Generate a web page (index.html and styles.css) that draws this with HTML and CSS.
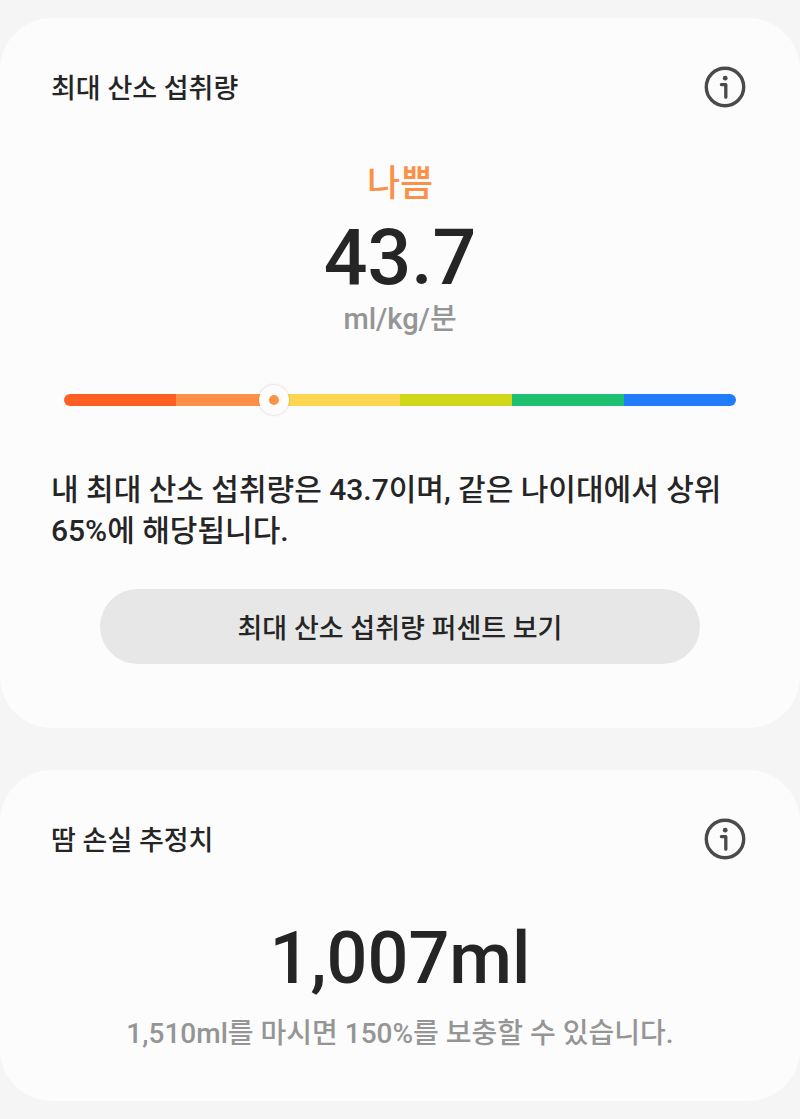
FILE: index.html
```html
<!DOCTYPE html>
<html lang="ko">
<head>
  <meta charset="utf-8">
  <meta name="viewport" content="width=device-width, initial-scale=1">
  <title>최대 산소 섭취량</title>
  <link rel="stylesheet" href="styles.css">
</head>
<body>
  <main class="page">
    <section class="card vo2-card">
      <div class="card-header">
        <h2 class="card-title">최대 산소 섭취량</h2>
        <button class="info-button" type="button" aria-label="정보">
          <svg class="info-icon" viewBox="0 0 42 42" aria-hidden="true">
            <circle cx="21" cy="21" r="18.7" fill="none" stroke="currentColor" stroke-width="3.4"/>
            <circle cx="21.2" cy="12.2" r="2.4" fill="currentColor"/>
            <path d="M17.4 18.6h4.4v12.6" fill="none" stroke="currentColor" stroke-width="3.3" stroke-linejoin="round" stroke-linecap="round"/>
          </svg>
        </button>
      </div>

      <div class="reading">
        <p class="level">나쁨</p>
        <p class="value">43.7</p>
        <p class="unit">ml/kg/분</p>
      </div>

      <div class="scale">
        <span class="segment segment-1"></span>
        <span class="segment segment-2"></span>
        <span class="segment segment-3"></span>
        <span class="segment segment-4"></span>
        <span class="segment segment-5"></span>
        <span class="segment segment-6"></span>
        <span class="marker" style="left: 31.25%"></span>
      </div>

      <p class="description">내 최대 산소 섭취량은 43.7이며, 같은 나이대에서 상위 65%에 해당됩니다.</p>
      <button class="button" type="button">최대 산소 섭취량 퍼센트 보기</button>
    </section>

    <section class="card sweat-card">
      <div class="card-header">
        <h2 class="card-title">땀 손실 추정치</h2>
        <button class="info-button" type="button" aria-label="정보">
          <svg class="info-icon" viewBox="0 0 42 42" aria-hidden="true">
            <circle cx="21" cy="21" r="18.7" fill="none" stroke="currentColor" stroke-width="3.4"/>
            <circle cx="21.2" cy="12.2" r="2.4" fill="currentColor"/>
            <path d="M17.4 18.6h4.4v12.6" fill="none" stroke="currentColor" stroke-width="3.3" stroke-linejoin="round" stroke-linecap="round"/>
          </svg>
        </button>
      </div>

      <p class="value sweat-value">1,007ml</p>
      <p class="hint">1,510ml를 마시면 150%를 보충할 수 있습니다.</p>
    </section>
  </main>
</body>
</html>
```

FILE: styles.css
```css
* {
  margin: 0;
  padding: 0;
  box-sizing: border-box;
}

body {
  background: #f5f5f5;
  color: #252525;
  font-family: Roboto, "Noto Sans CJK KR", sans-serif;
  font-weight: 500;
  word-break: keep-all;
}

.page {
  display: flex;
  flex-direction: column;
  gap: 42px;
  padding: 18px 0;
}

.card {
  display: flex;
  flex-direction: column;
  background: #fcfcfc;
  border-radius: 52px;
  padding: 48px 51px 64px;
}

.card-header {
  display: flex;
  align-items: center;
  justify-content: space-between;
}

.card-title {
  padding-top: 4px;
  font-size: 27px;
  font-weight: 500;
  line-height: 38px;
}

.info-button {
  width: 42px;
  height: 42px;
  margin-right: 3px;
  border: none;
  background: none;
  color: #4a4a4a;
  cursor: pointer;
}

.info-icon {
  display: block;
  width: 42px;
  height: 42px;
}

.reading {
  margin-top: 52px;
  text-align: center;
}

.level {
  margin-bottom: 6px;
  color: #fa9148;
  font-size: 36px;
  line-height: 48px;
}

.value {
  font-size: 77px;
  line-height: 88px;
  text-align: center;
}

.unit {
  color: #959595;
  font-size: 29px;
  line-height: 34px;
}

.scale {
  position: relative;
  display: flex;
  height: 12px;
  margin: 58px 13px 0;
}

.segment {
  flex: 1;
}

.segment-1 {
  background: #fe6023;
  border-radius: 6px 0 0 6px;
}

.segment-2 {
  background: #fe9145;
}

.segment-3 {
  background: #fed553;
}

.segment-4 {
  background: #ced71c;
}

.segment-5 {
  background: #1fbf72;
}

.segment-6 {
  background: #217cfc;
  border-radius: 0 6px 6px 0;
}

.marker {
  position: absolute;
  top: 50%;
  width: 30px;
  height: 30px;
  border: 10px solid #fcfcfc;
  border-radius: 50%;
  background: #fd9144;
  box-shadow: 0 0 3px rgba(0, 0, 0, 0.18);
  transform: translate(-50%, -50%);
}

.description {
  margin-top: 63px;
  font-size: 30px;
  line-height: 41px;
}

.button {
  align-self: center;
  width: 86%;
  height: 75px;
  margin-top: 38px;
  border: none;
  border-radius: 38px;
  background: #e7e7e7;
  color: #252525;
  font: inherit;
  font-size: 27px;
  cursor: pointer;
}

.sweat-card {
  padding-bottom: 47px;
}

.sweat-value {
  margin-top: 55px;
  font-size: 72px;
}

.hint {
  margin-top: 11px;
  color: #959595;
  font-size: 28px;
  line-height: 40px;
  text-align: center;
}
```
